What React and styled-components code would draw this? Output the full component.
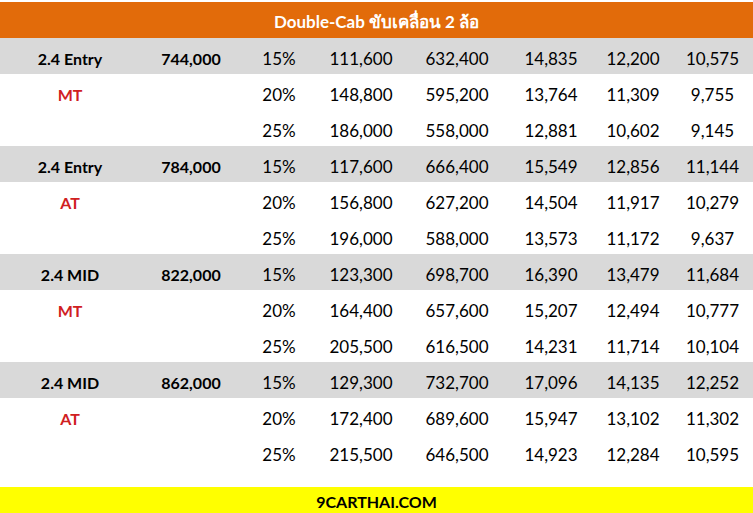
import React from "react";
import styled, { createGlobalStyle } from "styled-components";

const Global = createGlobalStyle`
  html, body { margin: 0; padding: 0; background: #ffffff; }
  body { font-family: "Lato", "Noto Sans", sans-serif; }
`;

const Page = styled.div`
  width: 753px;
  height: 513px;
  padding-top: 2px;
  box-sizing: border-box;
  display: flex;
  flex-direction: column;
  overflow: hidden;
`;

const Header = styled.div`
  height: 36px;
  flex: none;
  box-sizing: border-box;
  padding-top: 2px;
  background: #e26b0a;
  color: #ffffff;
  display: flex;
  align-items: center;
  justify-content: center;
  font-weight: 700;
  font-size: 17px;
`;

const COLS = "140px 102px 74px 90px 102px 86px 78px 81px";

const Row = styled.div`
  display: grid;
  grid-template-columns: ${COLS};
  height: 36px;
  flex: none;
  box-sizing: border-box;
  padding-top: 4px;
  align-items: center;
  background: ${(p) => (p.$shaded ? "#d9d9d9" : "#ffffff")};
`;

const Cell = styled.div`
  text-align: center;
  font-size: ${(p) => (p.$bold ? "16px" : "17px")};
  font-weight: ${(p) => (p.$bold ? 700 : 400)};
  color: ${(p) => (p.$red ? "#d0201f" : "#000000")};
  white-space: nowrap;
`;

const Footer = styled.div`
  margin-top: 17px;
  height: 26px;
  flex: none;
  box-sizing: border-box;
  padding-top: 2px;
  background: #ffff00;
  display: flex;
  align-items: center;
  justify-content: center;
  font-weight: 700;
  font-size: 16px;
  color: #000;
`;

const groups = [
  {
    name: "2.4 Entry",
    gear: "MT",
    price: "744,000",
    rows: [
      ["15%", "111,600", "632,400", "14,835", "12,200", "10,575"],
      ["20%", "148,800", "595,200", "13,764", "11,309", "9,755"],
      ["25%", "186,000", "558,000", "12,881", "10,602", "9,145"],
    ],
  },
  {
    name: "2.4 Entry",
    gear: "AT",
    price: "784,000",
    rows: [
      ["15%", "117,600", "666,400", "15,549", "12,856", "11,144"],
      ["20%", "156,800", "627,200", "14,504", "11,917", "10,279"],
      ["25%", "196,000", "588,000", "13,573", "11,172", "9,637"],
    ],
  },
  {
    name: "2.4 MID",
    gear: "MT",
    price: "822,000",
    rows: [
      ["15%", "123,300", "698,700", "16,390", "13,479", "11,684"],
      ["20%", "164,400", "657,600", "15,207", "12,494", "10,777"],
      ["25%", "205,500", "616,500", "14,231", "11,714", "10,104"],
    ],
  },
  {
    name: "2.4 MID",
    gear: "AT",
    price: "862,000",
    rows: [
      ["15%", "129,300", "732,700", "17,096", "14,135", "12,252"],
      ["20%", "172,400", "689,600", "15,947", "13,102", "11,302"],
      ["25%", "215,500", "646,500", "14,923", "12,284", "10,595"],
    ],
  },
];

export default function App() {
  return (
    <>
      <Global />
      <Page>
        <Header>Double-Cab ขับเคลื่อน 2 ล้อ</Header>
        {groups.map((g, gi) =>
          g.rows.map((r, ri) => (
            <Row key={`${gi}-${ri}`} $shaded={ri === 0}>
              <Cell $bold $red={ri === 1}>
                {ri === 0 ? g.name : ri === 1 ? g.gear : ""}
              </Cell>
              <Cell $bold>{ri === 0 ? g.price : ""}</Cell>
              {r.map((v, i) => (
                <Cell key={i}>{v}</Cell>
              ))}
            </Row>
          ))
        )}
        <Footer>9CARTHAI.COM</Footer>
      </Page>
    </>
  );
}
